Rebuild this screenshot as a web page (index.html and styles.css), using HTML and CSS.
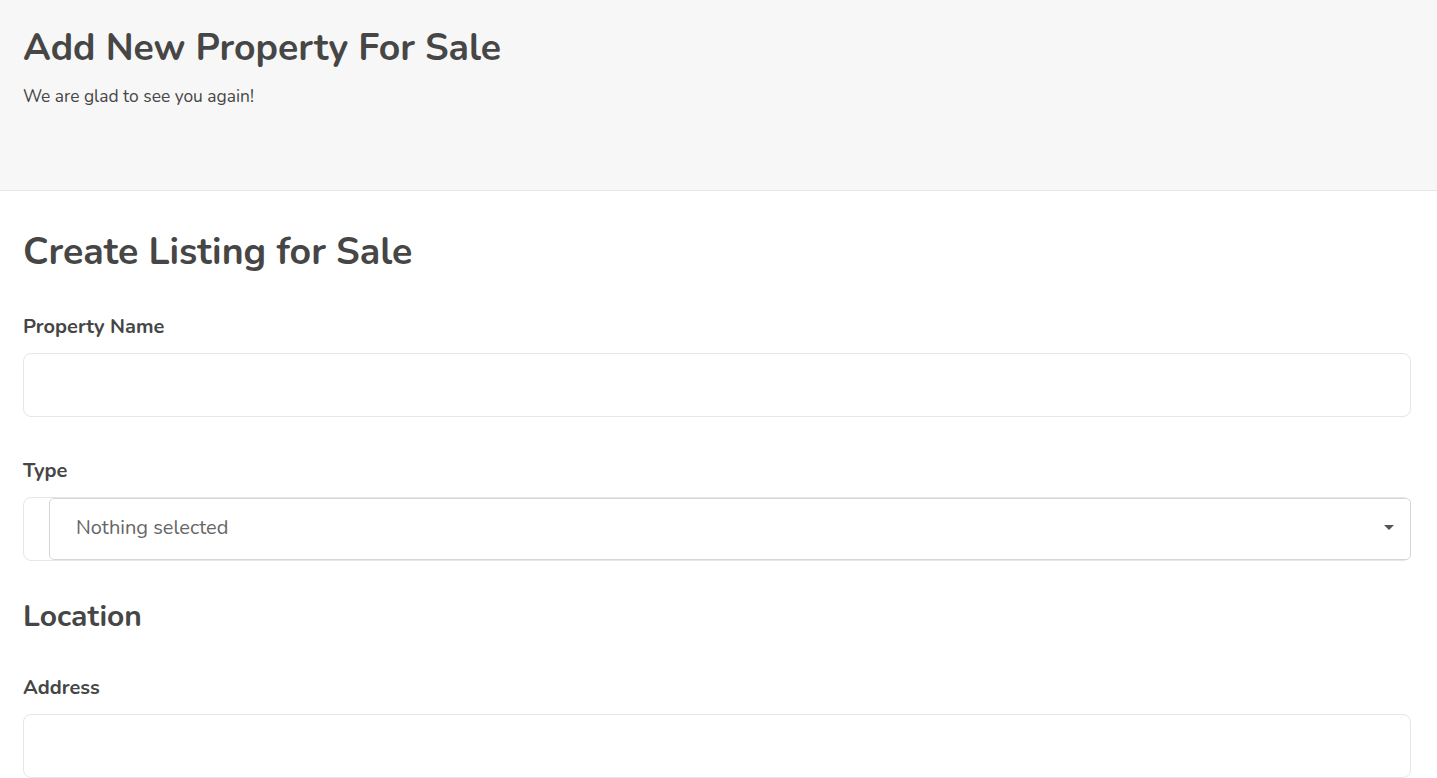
FILE: index.html
```html
<!DOCTYPE html>
<html lang="en">
<head>
<meta charset="utf-8">
<title>Add New Property For Sale</title>
<link rel="stylesheet" href="styles.css">
</head>
<body>
<header class="page-header">
  <h1 class="page-title">Add New Property For Sale</h1>
  <p class="page-sub">We are glad to see you again!</p>
</header>
<main class="content">
  <h2 class="section-title">Create Listing for Sale</h2>
  <div class="field field-first">
    <label class="field-label">Property Name</label>
    <input class="text-input" type="text">
  </div>
  <div class="field">
    <label class="field-label">Type</label>
    <div class="select-wrap">
      <button class="select-btn" type="button">
        <span class="select-text">Nothing selected</span>
        <span class="caret"></span>
      </button>
    </div>
  </div>
  <h3 class="group-title">Location</h3>
  <div class="field field-after-group">
    <label class="field-label">Address</label>
    <input class="text-input" type="text">
  </div>
</main>
</body>
</html>
```
FILE: styles.css
```css
* { box-sizing: border-box; }
html, body { margin: 0; padding: 0; }
body {
  font-family: "Nunito", "Lato", "Noto Sans", sans-serif;
  color: #464646;
  background: #fff;
  overflow: hidden;
}
.page-header {
  background: #f7f7f7;
  border-bottom: 1px solid #e6e6e6;
  height: 191px;
  padding: 24px 24px 0 23px;
}
.page-title {
  margin: 0;
  font-size: 37.4px;
  line-height: 48px;
  font-weight: 700;
  color: #464646;
}
.page-sub {
  margin: 12px 0 0;
  font-size: 17.4px;
  line-height: 24px;
}
.content {
  padding: 0 26px 0 23px;
}
.section-title {
  margin: 37px 0 0;
  font-size: 37.5px;
  line-height: 48px;
  font-weight: 700;
}
.field-label {
  display: block;
  font-size: 20px;
  font-weight: 700;
  line-height: 24px;
  margin-top: 42px;
  margin-bottom: 14px;
}
.field-first .field-label { margin-top: 39px; }
.field-after-group .field-label { margin-top: 41px; }
.text-input {
  display: block;
  width: 100%;
  height: 64px;
  border: 1px solid #e6e6e6;
  border-radius: 8px;
  background: #fff;
  font: inherit;
  outline: none;
}
.select-wrap {
  display: flex;
  height: 64px;
  border: 1px solid #e6e6e6;
  border-radius: 8px;
  padding-left: 25px;
}
.select-btn {
  flex: 1;
  margin: 0 -1px 0 0;
  display: flex;
  align-items: center;
  justify-content: space-between;
  border: 1px solid #d6d6d6;
  border-radius: 5px;
  background: #fff;
  padding: 0 16px 4px 26px;
  font-family: inherit;
  font-size: 20px;
  color: #666;
  cursor: pointer;
}
.caret {
  width: 0;
  height: 0;
  border-left: 5px solid transparent;
  border-right: 5px solid transparent;
  border-top: 5px solid #555;
}
.group-title {
  margin: 38px 0 0;
  font-size: 30px;
  line-height: 36px;
  font-weight: 700;
}
```
